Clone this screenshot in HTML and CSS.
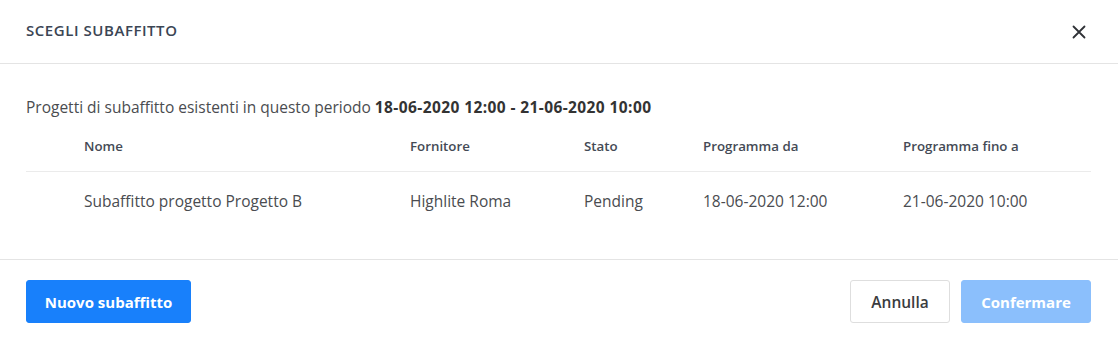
FILE: index.html
```html
<!DOCTYPE html>
<html lang="it">
<head>
<meta charset="utf-8">
<title>Scegli subaffitto</title>
<link rel="stylesheet" href="styles.css">
</head>
<body>
<div class="modal">
  <header class="modal-header">
    <h1 class="modal-title">SCEGLI SUBAFFITTO</h1>
    <button class="close" aria-label="Chiudi">
      <svg width="14" height="14" viewBox="0 0 14 14"><path d="M1.5 1.5L12.5 12.5M12.5 1.5L1.5 12.5" stroke="#2f3237" stroke-width="1.8" stroke-linecap="round"/></svg>
    </button>
  </header>
  <section class="modal-body">
    <p class="intro">Progetti di subaffitto esistenti in questo periodo <strong>18-06-2020 12:00 - 21-06-2020 10:00</strong></p>
    <div class="table">
      <div class="row head">
        <span></span><span>Nome</span><span>Fornitore</span><span>Stato</span><span>Programma da</span><span>Programma fino a</span>
      </div>
      <div class="row data">
        <span></span><span>Subaffitto progetto Progetto B</span><span>Highlite Roma</span><span>Pending</span><span>18-06-2020 12:00</span><span>21-06-2020 10:00</span>
      </div>
    </div>
  </section>
  <footer class="modal-footer">
    <button class="btn btn-primary">Nuovo subaffitto</button>
    <div class="actions">
      <button class="btn btn-default">Annulla</button>
      <button class="btn btn-primary disabled">Confermare</button>
    </div>
  </footer>
</div>
</body>
</html>
```
FILE: styles.css
```css
* { box-sizing: border-box; }
html, body { margin: 0; padding: 0; background: #fff; }
body { font-family: "Open Sans", "Liberation Sans", sans-serif; color: #3d3f43; }
.modal { width: 1118px; height: 339px; display: flex; flex-direction: column; }
.modal-header {
  height: 64px; display: flex; align-items: center; justify-content: space-between;
  padding: 0 26px; border-bottom: 1px solid #e4e4e4;
}
.modal-title { margin: 0 0 3px; font-size: 15px; font-weight: 600; color: #3b4554; letter-spacing: 0.55px; }
.close { border: 0; background: none; padding: 0; width: 14px; height: 14px; cursor: pointer; display: flex; margin-right: 6px; }
.modal-body { padding: 34px 26px 0; height: 196px; border-bottom: 1px solid #e4e4e4; }
.intro { margin: 0; font-size: 15.5px; color: #4a4c50; line-height: 18px; }
.intro strong { font-weight: 700; color: #333; letter-spacing: 0.4px; }
.table { margin-top: 4px; width: 1065px; }
.row { display: grid; grid-template-columns: 58px 326px 174px 119px 200px 1fr; align-items: center; }
.row.head { height: 52px; border-bottom: 1px solid #ebebeb; font-size: 13.3px; font-weight: 600; color: #444a55; }
.row.data { height: 57px; font-size: 15.5px; color: #4a4c50; padding-top: 1px; }
.modal-footer { flex: 1; display: flex; align-items: center; justify-content: space-between; padding: 4px 27px 0 26px; }
.actions { display: flex; gap: 11px; }
.btn {
  height: 43px; border-radius: 3px; font-family: inherit; font-size: 15px; font-weight: 700;
  padding: 0 19px; cursor: pointer;
}
.btn-primary { background: #1880fb; color: #fff; border: 1px solid #1880fb; width: 165px; padding: 0; }
.btn-primary.disabled { background: #8bbffc; border-color: #8bbffc; width: 130px; }
.btn-default { background: #fff; border: 1px solid #dedede; color: #3a3c40; width: 100px; padding: 0; font-weight: 600; font-size: 15.5px; }
```
